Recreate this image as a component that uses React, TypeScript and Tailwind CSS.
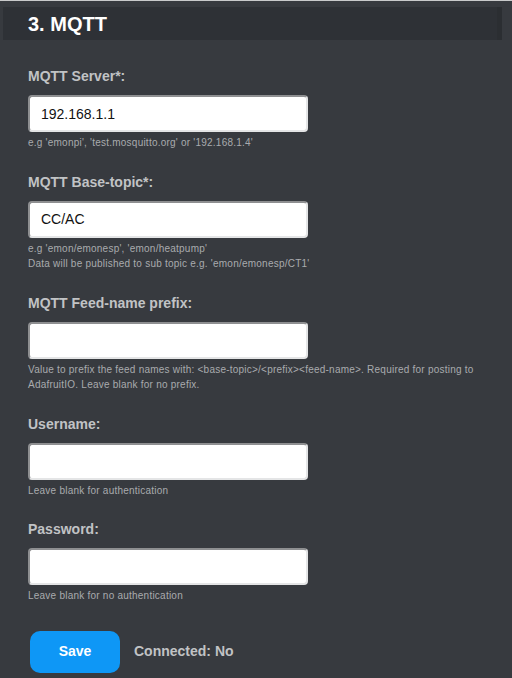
import React from "react";

interface FieldProps {
  label: string;
  value?: string;
  help: React.ReactNode;
  type?: string;
}

const Field: React.FC<FieldProps> = ({ label, value = "", help, type = "text" }) => {
  return (
    <div className="flex flex-col">
      <label className="text-[14px] leading-[16px] font-bold text-[#c1c3c5]">{label}</label>
      <input
        type={type}
        defaultValue={value}
        className={[
          "mt-[11px] w-[280px] h-[37px] px-[11px] rounded-[4px] bg-white text-[14px] text-[#111]",
          "border-2 border-t-[#8e8f91] border-l-[#8e8f91] border-r-[#e4e5e6] border-b-[#e4e5e6]",
          "focus:outline-none",
        ].join(" ")}
      />
      <div className="mt-[3px] text-[10px] leading-[15.5px] tracking-[0.23px] text-[#a9abae]">{help}</div>
    </div>
  );
};

export default function App() {
  return (
    <div
      className="w-[512px] h-[678px] overflow-hidden bg-[#373a3f] border-t border-[#c9cacb]"
      style={{ fontFamily: '"Liberation Sans", Arial, sans-serif' }}
    >
      <div className="pt-[6px] pl-[3px] pr-[10px]">
        <div className="h-[33px] bg-[#2e3136] border-r-[5px] border-[#2b2e32] flex items-center pl-[25px]">
          <h2 className="text-[20px] font-bold text-white leading-none">3. MQTT</h2>
        </div>
      </div>

      <div className="px-[28px] pt-[28px] flex flex-col gap-[23px]">
        <Field
          label="MQTT Server*:"
          value="192.168.1.1"
          help={<p>e.g 'emonpi', 'test.mosquitto.org' or '192.168.1.4'</p>}
        />
        <Field
          label="MQTT Base-topic*:"
          value="CC/AC"
          help={
            <>
              <p>e.g 'emon/emonesp', 'emon/heatpump'</p>
              <p>Data will be published to sub topic e.g. 'emon/emonesp/CT1'</p>
            </>
          }
        />
        <Field
          label="MQTT Feed-name prefix:"
          help={
            <p>
              Value to prefix the feed names with: &lt;base-topic&gt;/&lt;prefix&gt;&lt;feed-name&gt;. Required for
              posting to AdafruitIO. Leave blank for no prefix.
            </p>
          }
        />
        <Field label="Username:" help={<p>Leave blank for authentication</p>} />
        <Field label="Password:" type="password" help={<p>Leave blank for no authentication</p>} />

        <div className="flex items-center gap-[14px] pl-[2px] mt-[4px]">
          <button className="w-[90px] h-[42px] rounded-[10px] bg-[#0e97f6] text-white text-[14px] font-bold">
            Save
          </button>
          <span className="text-[14px] font-bold text-[#c1c3c5]">Connected: No</span>
        </div>
      </div>
    </div>
  );
}
